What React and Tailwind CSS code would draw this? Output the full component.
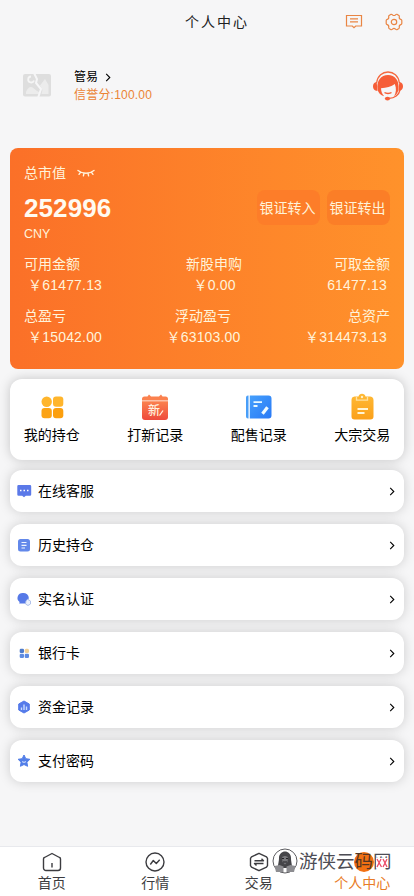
import React from 'react';

const CJK = "font-['Liberation_Sans','Noto_Sans_CJK_SC',sans-serif]";

function Chevron({ className }) {
  return (
    <svg viewBox="0 0 6 10" className={className} fill="none" stroke="currentColor" strokeWidth="1.2">
      <path d="M1 1l4 4-4 4" />
    </svg>
  );
}

function MessageIcon() {
  return (
    <svg viewBox="0 0 18 16" className="h-4 w-[18px]" fill="none" stroke="#e98544" strokeWidth="1.2">
      <path d="M1.5 1.5h15v10.5H10.7L9 13.7 7.3 12H1.5zM5 4.8h8M5 7.8h8" />
    </svg>
  );
}

function GearIcon() {
  return (
    <svg viewBox="0 0 18 18" className="size-[18px]" fill="none" stroke="#e98544" strokeWidth="1.2" strokeLinejoin="round">
      <path d="M6.1 1.3c.7-.2 1 .1 1.4.5.9.9 2.1.9 3 0 .4-.4.8-.7 1.4-.5l2 1.2c.5.4.5.8.4 1.3-.3 1.3.3 2.2 1.5 2.6.6.2 1 .4 1 1v3.2c0 .6-.4.8-1 1-1.2.4-1.8 1.3-1.5 2.6.1.5.1.9-.4 1.3l-2 1.2c-.6.2-1-.1-1.4-.5-.9-.9-2.1-.9-3 0-.4.4-.7.7-1.4.5l-2-1.2c-.5-.4-.5-.8-.4-1.3.3-1.3-.3-2.2-1.5-2.6-.6-.2-1-.4-1-1V7.4c0-.6.4-.8 1-1 1.2-.4 1.8-1.3 1.5-2.6-.1-.5-.1-.9.4-1.3z" />
      <circle cx="9" cy="9" r="2.7" />
    </svg>
  );
}

function SupportIcon() {
  return (
    <svg viewBox="0 0 30 30" className="size-[30px]">
      <path d="M3.600 12C4.500 4.500 9.500 1 15 1s10.500 3.500 11.400 11" fill="none" stroke="#f4693f" strokeWidth="1.300" />
      <path d="M3.700 11C1 11.300 0 13 0 15.300S1.300 20 4.500 20zM26.300 11c2.700.3 3.700 2 3.700 4.300S28.700 20 25.500 20z" fill="#f65e38" />
      <path d="M4.600 18.500C3.300 9.500 8 4 15 4s11.700 5.500 10.400 14.500c-.5 3.200-2 5.400-4.300 6.800 2.100-3.600 2.500-8 .700-12.300-3.300 2.600-8.500 3.800-13.800 4.300.1 3.200 1.200 6 3.200 8-3.700-1.200-6-3.600-6.600-6.800z" fill="#f65e38" />
      <path d="M11.500 21.500c1.500 1.300 5.500 1.300 7 0M27 19c-1 5-5.500 8.400-11 8.400" fill="none" stroke="#f65e38" strokeWidth="1.300" />
      <ellipse cx="14.500" cy="27.600" rx="2.600" ry="1.900" fill="#f65e38" />
    </svg>
  );
}

function BrokenImage() {
  return (
    <svg viewBox="0 0 30 26" className="h-[26px] w-[30px]">
      <rect x="1" y="2" width="28" height="22.500" rx="2" fill="#dedede" />
      <path d="M4 20c1-3 3-5 5-5s4 3 8 5v2H4zM19.500 22l1-4-2.500-4.500L23 7l3.500 6v9z" fill="#ececec" />
      <path d="M9 4.500a3 3 0 1 0 3 4" fill="none" stroke="#f5f5f5" strokeWidth="1.800" />
      <path d="M12 1l3 6-1 4 5 6-3 9" fill="none" stroke="#f6f6f7" strokeWidth="2" />
    </svg>
  );
}

function ClosedEye() {
  return (
    <svg viewBox="0 0 18 9" className="h-[9px] w-[18px]" fill="none" stroke="#fff5df" strokeWidth="1.400" strokeLinecap="round">
      <path d="M1 1.500c4.500 3.600 11.500 3.600 16 0M3.500 3.300L2 5.300M7 4.400l-.6 2.400M11 4.400l.6 2.400M14.500 3.300L16 5.300" />
    </svg>
  );
}

const actions = [
  {
    label: '我的持仓',
    icon: (
      <svg viewBox="0 0 28 28" className="size-7">
        <circle cx="8.700" cy="8.700" r="5.200" fill="#ffb52c" />
        <rect x="15" y="3.500" width="10.300" height="10.300" rx="3" fill="#ffb52c" />
        <rect x="3.500" y="15" width="10.300" height="10.300" rx="3" fill="#fca315" />
        <rect x="15" y="15" width="10.300" height="10.300" rx="3" fill="#fc9f0e" />
      </svg>
    ),
  },
  {
    label: '打新记录',
    icon: (
      <svg viewBox="0 0 28 28" className="size-7">
        <defs>
          <linearGradient id="red" x1="0" y1="0" x2="0" y2="1">
            <stop stopColor="#fb814e" />
            <stop offset="1" stopColor="#ee4a3c" />
          </linearGradient>
        </defs>
        <path d="M1 7.500V6a2.500 2.500 0 0 1 2.500-2.500h3L8 1.500l2 2h8l2-2 1.500 2h3A2.500 2.500 0 0 1 27 6v1.500z" fill="#fb814e" />
        <path d="M1 8.300h26V24a3 3 0 0 1-3 3H4a3 3 0 0 1-3-3z" fill="url(#red)" />
        <text x="13" y="21.500" textAnchor="middle" fontSize="12" fontWeight="500" fill="#fff0df" fontFamily="Noto Sans CJK SC">新</text>
        <path d="M18.500 22.500l3.500-5" stroke="#fff0df" strokeWidth="1.300" />
      </svg>
    ),
  },
  {
    label: '配售记录',
    icon: (
      <svg viewBox="0 0 28 28" className="size-7">
        <defs>
          <linearGradient id="blue" x1="0" y1="0" x2="1" y2="1">
            <stop stopColor="#45a0fc" />
            <stop offset="1" stopColor="#2979f6" />
          </linearGradient>
        </defs>
        <path d="M3.500 2.500v23H3a2 2 0 0 1-2-2v-19a2 2 0 0 1 2-2z" fill="#489ef8" />
        <path d="M4.800 2.500h18.700a3 3 0 0 1 3 3v17a3 3 0 0 1-3 3H4.800z" fill="url(#blue)" />
        <path d="M8.500 9.200h8.500M8.500 13h4" stroke="#e8f9ff" strokeWidth="1.800" />
        <path d="M17.500 20.800l5-6.500" stroke="#f0fbff" strokeWidth="3.200" />
      </svg>
    ),
  },
  {
    label: '大宗交易',
    icon: (
      <svg viewBox="0 0 28 28" className="size-7">
        <defs>
          <linearGradient id="amber" x1="0" y1="0" x2="0" y2="1">
            <stop stopColor="#ffba35" />
            <stop offset="1" stopColor="#fba01a" />
          </linearGradient>
        </defs>
        <path d="M6.500 3.500h4a3.600 3.600 0 0 1 7 0h4A3.500 3.500 0 0 1 25.500 7v16.500a3 3 0 0 1-3 3h-16a3 3 0 0 1-3-3V7a3.500 3.500 0 0 1 3-3.500z" fill="url(#amber)" />
        <path d="M8.500 3.800v3.400h11V3.800" fill="none" stroke="#ffe1a0" strokeWidth="1.300" />
        <circle cx="14" cy="4" r="1.200" fill="#fff0ca" />
        <path d="M9.500 16h10.500M9.500 20h7" stroke="#fff5d6" strokeWidth="1.900" />
      </svg>
    ),
  },
];

const menu = [
  {
    label: '在线客服',
    icon: (
      <>
        <path d="M2.500 2h11.500a1.200 1.200 0 0 1 1.200 1.200v8.300a1.200 1.200 0 0 1-1.200 1.200H9.800L8 14.200l-1.800-1.500H2.500a1.200 1.200 0 0 1-1.200-1.200V3.200A1.200 1.200 0 0 1 2.500 2z" fill="#5b79e8" />
        <path d="M4 7.500h1.500M7.500 7.500H9M11 7.500h1.500" stroke="#fff" strokeWidth="1.500" />
      </>
    ),
  },
  {
    label: '历史持仓',
    icon: (
      <>
        <rect x="2" y="2" width="12" height="12.500" rx="2.500" fill="#6288ea" />
        <path d="M5.500 5.500h5M5.500 8.300h5M5.500 11h3.500" stroke="#eef4ff" strokeWidth="1.200" />
      </>
    ),
  },
  {
    label: '实名认证',
    icon: (
      <>
        <path d="M7 2a5.500 5 0 0 1 5.800 5l-1.800 5.500H3.200l.4-1.500A5.200 5 0 0 1 7 2z" fill="#5679e7" />
        <path d="M10 10l1.500-1.700 3 1.700v3L12 14.500 9.500 13z" fill="#edf2fc" stroke="#a9bce8" strokeWidth=".9" />
      </>
    ),
  },
  {
    label: '银行卡',
    icon: (
      <>
        <rect x="3.700" y="3.700" width="4.300" height="4.300" rx="1.200" fill="#4f7ccb" />
        <rect x="8.700" y="3.700" width="4.300" height="4.300" rx="1.500" fill="#f1cf95" />
        <rect x="3.700" y="8.700" width="4.300" height="4.300" rx="1.200" fill="#608ce0" />
        <rect x="8.700" y="8.700" width="4.300" height="4.300" rx="1.200" fill="#608ce0" />
      </>
    ),
  },
  {
    label: '资金记录',
    icon: (
      <>
        <path d="M8 2l5.300 3v6L8 14l-5.300-3V5z" fill="#557bea" stroke="#557bea" strokeLinejoin="round" />
        <path d="M5.500 11V8.500M8 11V5.500M10.500 11V7.500" stroke="#c9dcff" strokeWidth="1.400" />
      </>
    ),
  },
  {
    label: '支付密码',
    icon: (
      <>
        <path d="M8 2l1.800 3.700 4.100.6-3 2.900.7 4.100L8 11.500l-3.600 1.800.7-4.100-3-2.900 4.100-.6z" fill="#527ee8" stroke="#527ee8" strokeLinejoin="round" />
        <path d="M6 8.500c1 1 3 1 4 0" fill="none" stroke="#e5eeff" />
      </>
    ),
  },
];

function Stat({ label, value, align }) {
  return (
    <div className={`flex flex-col ${align}`}>
      <span className="text-sm leading-[21px]">{label}</span>
      <span className="mr-[3px] text-sm leading-[21px] tracking-[0.18px] whitespace-pre">{value}</span>
    </div>
  );
}

function Watermark() {
  return (
    <div className="absolute top-[1px] left-[271px] flex items-center">
      <svg viewBox="0 0 28 28" className="size-7" fill="none">
        <circle cx="14" cy="13" r="12" stroke="#5c5c60" strokeWidth="1" />
        <path d="M7 20c0-5 1-6 1-10 0-4 3-6.500 6-6.500s6 2.500 6 6.500c0 4 1 5 1 10z" fill="#454549" />
        <path d="M11 9.500c1-2 5-2 6 0l-.5 4.500L14 16.500 11.500 14z" fill="#77777b" />
        <path d="M11 10.500h2M15 10.500h2M12 14h4" stroke="#222226" />
        <path d="M3.500 18l5-1 4 1.500V24H5zM24.500 18l-5-1-4 1.500V24H23z" fill="#8d8d91" />
      </svg>
      <div className="flex text-[18.500px] leading-7 text-[#4d4d55]">
        <span>游侠云</span>
        <span className="relative">
          <i className="absolute top-[4px] -left-px size-5 rounded-full bg-[#f27012]" />
          <span className="relative text-[#553624]">码</span>
        </span>
        <span className="relative">
          网
          <svg viewBox="0 0 12 10" className="absolute top-[10px] left-[3px] h-[10px] w-3 bg-white" fill="none" stroke="#ed4a66" strokeWidth="1.300">
            <path d="M1 1l4.500 8M5 1L1 9M7 1l4 8M11 1L7 9" />
          </svg>
        </span>
      </div>
    </div>
  );
}

const tabs = [
  {
    label: '首页',
    color: 'text-[#3c3c40]',
    icon: <path d="M10 1.500l7.500 4a1.500 1.500 0 0 1 1 1.500v9a2.500 2.500 0 0 1-2.500 2.500H4A2.500 2.500 0 0 1 1.500 16V7a1.500 1.500 0 0 1 1-1.500zM10 11v4.500" />,
  },
  {
    label: '行情',
    color: 'text-[#3c3c40]',
    icon: (
      <>
        <circle cx="10" cy="10" r="9" />
        <path d="M5.300 12.500l3-4 3 3 3.400-3.700" />
      </>
    ),
  },
  {
    label: '交易',
    color: 'text-[#3c3c40]',
    icon: <path d="M10 1.300l7.500 3.500 1 1.500v7.400l-1 1.500L10 18.700l-7.500-3.500-1-1.500V6.300l1-1.500zM5.500 8.800h9l-2-2M14.500 11.500h-9l2 2" />,
  },
  { label: '个人中心', color: 'text-[#e87b26]', icon: null },
];

export default function App() {
  return (
    <div className={`flex h-[896px] w-[414px] flex-col overflow-hidden bg-[#f6f6f7] text-black ${CJK}`}>
      <header className="grid h-11 grid-cols-[1fr_auto_1fr] items-center">
        <span />
        <h1 className="pl-[20px] pr-0 text-sm tracking-[2px] text-[#202020]">个人中心</h1>
        <div className="flex items-center justify-end gap-[22px] pr-[11px]">
          <MessageIcon />
          <GearIcon />
        </div>
      </header>

      <section className="flex h-[104px] items-start pt-[24px] pr-[11px] pl-[22px]">
        <div className="mt-[4px]"><BrokenImage /></div>
        <div className="ml-[22px] flex flex-1 flex-col text-xs leading-[18px]">
          <span className="flex items-center gap-[7px]">
            管易
            <Chevron className="h-[9px] w-[6px]" />
          </span>
          <span className="tracking-[0.2px] text-[#eb8435]">信誉分:100.00</span>
        </div>
        <div className="mt-[3px]"><SupportIcon /></div>
      </section>

      <section className="mx-[10px] h-[221px] rounded-lg bg-linear-to-r from-[#fb7028] to-[#ff922b] px-[14px] pt-[15px] text-[#fff3da]">
        <div className="flex h-5 items-center gap-[11px] text-sm">
          总市值
          <ClosedEye />
        </div>
        <div className="flex h-[62px] justify-between">
          <div className="flex flex-col pt-[10px]">
            <strong className="text-[26px] leading-[30px] tracking-[0.1px] text-[#fffaf0]">252996</strong>
            <span className="pt-px text-[12.500px] leading-[21px]">CNY</span>
          </div>
          <div className="flex gap-[7px] pt-[7px] text-sm">
            <button className="h-[35px] w-[63px] rounded-lg bg-[#fd7d29] whitespace-nowrap"><span className="-mr-2 -ml-[10px]">银证转入</span></button>
            <button className="h-[35px] w-[63px] rounded-lg bg-[#fb7e27] whitespace-nowrap"><span className="-mr-2 -ml-[10px]">银证转出</span></button>
          </div>
        </div>
        <div className="mt-[9px] flex flex-col gap-[10px]">
          <div className="grid grid-cols-[1fr_auto_1fr]">
            <Stat label="可用金额" value=" ￥61477.13" align="items-start" />
            <Stat label="新股申购" value=" ￥0.00" align="items-center pl-[14px]" />
            <Stat label="可取金额" value="61477.13" align="items-end" />
          </div>
          <div className="grid grid-cols-[1fr_auto_1fr]">
            <Stat label="总盈亏" value=" ￥15042.00" align="items-start" />
            <Stat label="浮动盈亏" value=" ￥63103.00" align="items-center -translate-x-[4px]" />
            <Stat label="总资产" value="￥314473.13" align="items-end" />
          </div>
        </div>
      </section>

      <section className="mx-[10px] mt-[10px] h-[81px] shrink-0 rounded-xl bg-white pt-[14px] shadow-[0_0_12px_rgba(0,0,0,0.2)]">
        <div className="-mx-[10px] grid grid-cols-4">
          {actions.map((a) => (
            <div key={a.label} className="flex flex-col items-center text-sm">
              {a.icon}
              <span className="mt-[4px] leading-[21px]">{a.label}</span>
            </div>
          ))}
        </div>
      </section>

      <nav className="mx-[10px] mt-[10px] flex flex-col gap-3">
        {menu.map((m) => (
          <div key={m.label} className="flex h-[42px] items-center rounded-xl bg-white pr-[9px] pl-[6px] text-sm shadow-[0_0_12px_rgba(0,0,0,0.17)]">
            <svg viewBox="0 0 16 16" className="size-4">{m.icon}</svg>
            <span className="ml-[6px] flex-1">{m.label}</span>
            <Chevron className="h-[9px] w-[6px]" />
          </div>
        ))}
      </nav>

      <footer className="relative mt-auto grid h-[50px] grid-cols-4 border-t border-[#e8e9ed] bg-white">
        {tabs.map((t) => (
          <div key={t.label} className={`flex flex-col items-center pt-[5px] text-sm ${t.color}`}>
            <svg viewBox="0 0 20 20" className="size-5" fill="none" stroke="currentColor" strokeWidth="1.400" strokeLinejoin="round">{t.icon}</svg>
            <span className="mt-px leading-[21px]">{t.label}</span>
          </div>
        ))}
        <Watermark />
      </footer>
    </div>
  );
}
